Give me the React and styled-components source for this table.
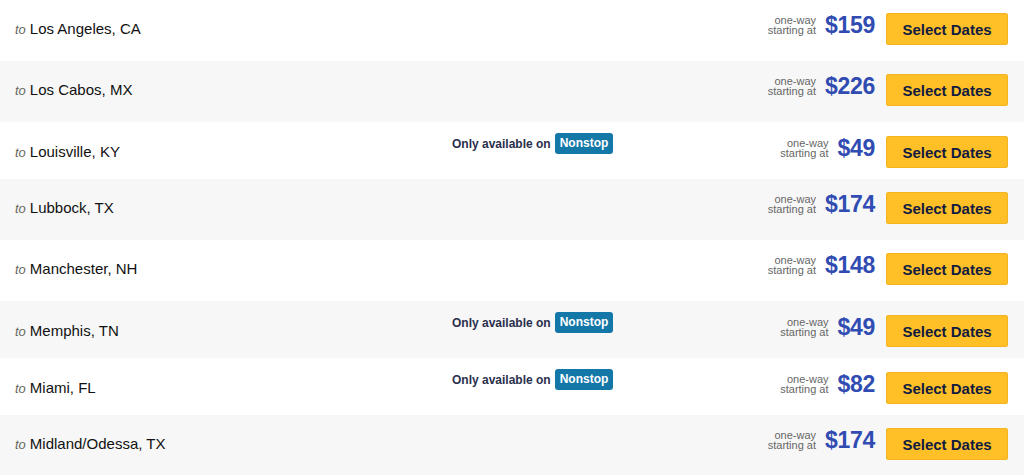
import React from 'react'
import styled, { createGlobalStyle } from 'styled-components'

const GlobalStyle = createGlobalStyle`
  body {
    margin: 0;
    background: #fff;
    font-family: "Liberation Sans", Arial, Helvetica, sans-serif;
  }
`

const List = styled.div`
  display: flex;
  flex-direction: column;
  width: 1024px;
`

const Row = styled.div`
  display: flex;
  align-items: flex-start;
  box-sizing: border-box;
  height: ${props => props.$badge ? '57px' : '61px'};
  padding: ${props => props.$badge ? '14px' : '13px'} 16px 0 15px;
  background: ${props => props.$shade ? '#f7f7f7' : '#fff'};
`

const City = styled.div`
  width: 437px;
  line-height: 32px;
  font-size: 15px;
  color: #111;
  white-space: nowrap;
`

const To = styled.span`
  font-style: italic;
  font-size: 13px;
  color: #66665e;
  margin-right: 4px;
`

const Middle = styled.div`
  flex: 1;
  display: flex;
  align-items: center;
  margin-top: -3px;
`

const OnlyText = styled.span`
  font-size: 12px;
  font-weight: bold;
  color: #2a2f4c;
  margin-right: 4px;
`

const Badge = styled.span`
  display: inline-block;
  background: #1377a8;
  color: #fff;
  font-size: 12px;
  font-weight: bold;
  line-height: 21px;
  padding: 0 5px;
  border-radius: 3px;
`

const PriceBlock = styled.div`
  display: flex;
  align-items: center;
  margin-top: 1px;
  margin-right: 11px;
`

const PriceLabel = styled.div`
  font-size: 11px;
  line-height: 10px;
  color: #666;
  text-align: right;
  margin-right: 9px;
  margin-top: 1px;
`

const Price = styled.div`
  font-size: 23px;
  font-weight: bold;
  color: #304cb2;
  line-height: 20px;
  letter-spacing: -0.3px;
`

const SelectButton = styled.button`
  width: 122px;
  height: 32px;
  box-sizing: border-box;
  background: #ffbf27;
  border: 1px solid #f4b422;
  border-radius: 2px;
  color: #111b40;
  font-family: "Liberation Sans", Arial, sans-serif;
  font-size: 15px;
  font-weight: bold;
  padding: 0;
  cursor: pointer;
`

const routes = [
  { city: 'Los Angeles, CA', price: 159 },
  { city: 'Los Cabos, MX', price: 226 },
  { city: 'Louisville, KY', price: 49, nonstop: true },
  { city: 'Lubbock, TX', price: 174 },
  { city: 'Manchester, NH', price: 148 },
  { city: 'Memphis, TN', price: 49, nonstop: true },
  { city: 'Miami, FL', price: 82, nonstop: true },
  { city: 'Midland/Odessa, TX', price: 174 },
]

const App = () => {
  return (
    <List>
      <GlobalStyle />
      {routes.map((r, i) => (
        <Row key={r.city} $shade={i % 2 === 1} $badge={r.nonstop}>
          <City><To>to</To>{r.city}</City>
          <Middle>
            {r.nonstop && (
              <>
                <OnlyText>Only available on</OnlyText>
                <Badge>Nonstop</Badge>
              </>
            )}
          </Middle>
          <PriceBlock>
            <PriceLabel>one-way<br />starting at</PriceLabel>
            <Price>${r.price}</Price>
          </PriceBlock>
          <SelectButton>Select Dates</SelectButton>
        </Row>
      ))}
    </List>
  )
}

export default App
